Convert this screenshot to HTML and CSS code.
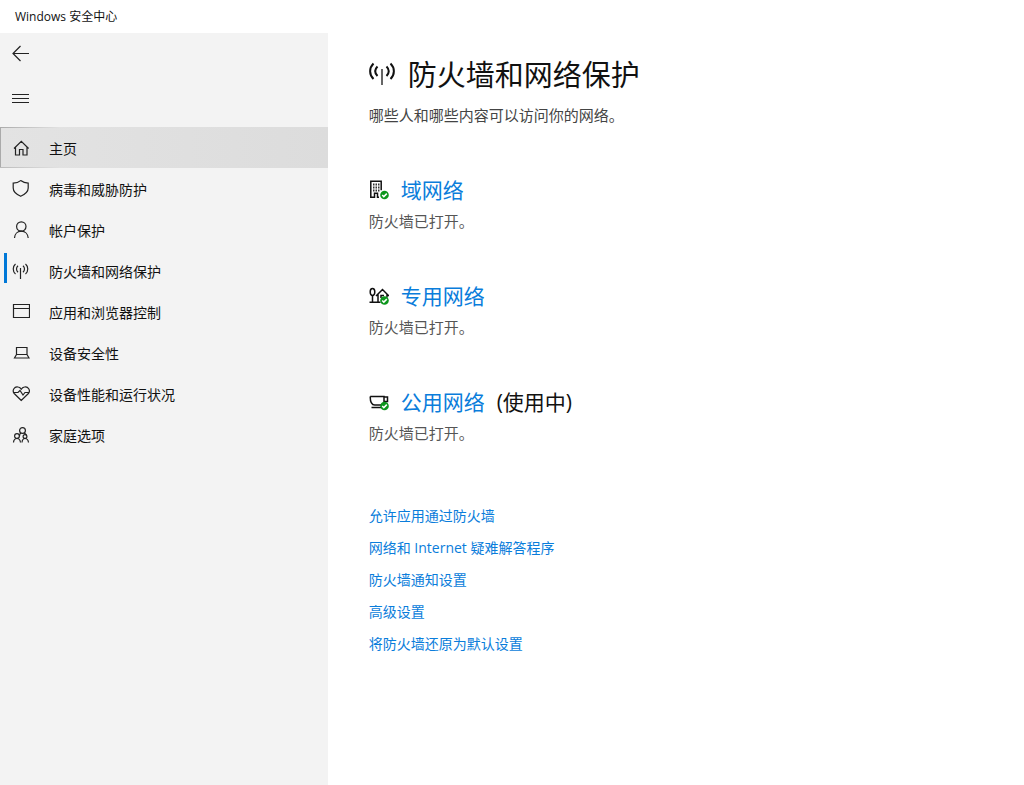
FILE: index.html
```html
<!DOCTYPE html>
<html lang="zh-CN">
<head>
<meta charset="utf-8">
<meta name="viewport" content="width=device-width, initial-scale=1">
<title>Windows 安全中心</title>
<link rel="stylesheet" href="styles.css">
</head>
<body>
<header class="titlebar">Windows 安全中心</header>
<div class="layout">
  <aside class="sidebar">
    <div class="tools">
      <button class="tool" type="button" aria-label="后退">
        <svg class="icon" viewBox="0 0 18 18"><path d="M17 8.500H1M8.500 1 1 8.500 8.500 16"/></svg>
      </button>
      <button class="tool" type="button" aria-label="菜单">
        <svg class="icon" viewBox="0 0 18 18"><path d="M0 4.500h17M0 8.500h17M0 12.500h17"/></svg>
      </button>
    </div>
    <nav class="nav">
      <a class="nav-item hovered" href="#home">
        <svg class="icon" viewBox="0 0 18 18"><path d="M2 9.500 9.300 2.300 16.600 9.500M3.500 8v8h4v-5.500h3.500v5.500h4V8"/></svg>
        <span>主页</span>
      </a>
      <a class="nav-item" href="#virus">
        <svg class="icon" viewBox="0 0 18 18"><path d="M8.700.6C6.500 2.300 4 3 1.200 3.100v5c0 3.500 3.500 6.500 7.500 8.200 4-1.700 7.500-4.700 7.500-8.200v-5C13.400 3 11 2.300 8.700.6z"/></svg>
        <span>病毒和威胁防护</span>
      </a>
      <a class="nav-item" href="#account">
        <svg class="icon" viewBox="0 0 18 18"><circle cx="9.300" cy="5.500" r="4.700"/><path d="M2.500 17c.2-4 3-6.800 6.800-6.800s6.600 2.800 6.900 6.800"/></svg>
        <span>帐户保护</span>
      </a>
      <a class="nav-item current" href="#firewall" aria-current="page">
        <svg class="icon" viewBox="0 0 18 18"><path d="M8.500 6v11M3.500 2C.500 4.500.500 9.500 3.500 12M13.500 2c3 2.500 3 7.500 0 10M6 3.800c-2 1.800-2 4.600 0 6.400M11 3.800c2 1.800 2 4.600 0 6.400"/></svg>
        <span>防火墙和网络保护</span>
      </a>
      <a class="nav-item" href="#apps">
        <svg class="icon" viewBox="0 0 18 18"><path d="M1.500 1.500h16v13h-16zM1.500 5.500h16"/></svg>
        <span>应用和浏览器控制</span>
      </a>
      <a class="nav-item" href="#device">
        <svg class="icon" viewBox="0 0 18 18"><path d="M4.500 10.500v-7h10.500v7M4.500 10.500h10.500l2 3.500h-14.500z"/></svg>
        <span>设备安全性</span>
      </a>
      <a class="nav-item" href="#health">
        <svg class="icon" viewBox="0 0 18 18"><path d="M9.300 15.500 2.200 8.500c-2.500-3 .3-7.500 4-6.500 1.500.3 2.500 1.200 3.100 2.200.6-1 1.600-1.900 3.100-2.200 3.700-1 6.500 3.500 4 6.500zM2 7.500h4l2-2 3 4.500 2-2.500h4"/></svg>
        <span>设备性能和运行状况</span>
      </a>
      <a class="nav-item" href="#family">
        <svg class="icon" viewBox="0 0 18 18"><circle cx="10.500" cy="4.500" r="2.900"/><circle cx="5" cy="10" r="2.400"/><circle cx="13" cy="10.500" r="1.900"/><path d="M1.500 16.500c.2-2.500 1.500-4 3.500-4s3.200 1.500 3.500 4M10 16.500c.2-2.500 1-4 3-4s3.200 1.500 3.500 4M9 7c-1 .5-1.500 1.500-1.500 3M12 7c1.300.5 2 1.200 2.500 2.300"/></svg>
        <span>家庭选项</span>
      </a>
    </nav>
  </aside>
  <main class="content">
    <div class="heading">
      <svg class="heading-icon" viewBox="0 0 26 26"><path class="ink" d="M4.500 1.500C0 6 0 12.500 4.500 17M21.500 1.500c4.500 4.500 4.500 11 0 15.500M8.500 4.500c-3 3-3 6.500 0 9.500M17.500 4.500c3 3 3 6.500 0 9.500"/><path class="stem" d="M13 7v16"/></svg>
      <h1>防火墙和网络保护</h1>
    </div>
    <p class="intro">哪些人和哪些内容可以访问你的网络。</p>
    <div class="networks">
      <section>
        <h2>
          <svg class="net-icon" viewBox="0 0 20 20"><path class="ink" d="M10 17.200H8.500v-4h-3v4H1.800V1.200h10.400v9"/><path class="windows" d="M4 4.500h6.500M4 7.500h6.500M4 10.500h6.500"/><circle class="badge" cx="15.500" cy="15" r="4.300"/><path class="tick" d="m13.200 15 1.600 1.600 3-3"/></svg>
          <a href="#domain">域网络</a>
        </h2>
        <p>防火墙已打开。</p>
      </section>
      <section>
        <h2>
          <svg class="net-icon" viewBox="0 0 20 20"><ellipse class="ink" cx="3.500" cy="6" rx="2.300" ry="3.400"/><path class="ink" d="M3.500 9.500v6.500M.500 16.200h11M7 10l6.500-6.500L20 10M9 8.500v7.500M18 8.500v3M12 12V9.500h3"/><circle class="badge" cx="15.500" cy="14.500" r="4.300"/><path class="tick" d="m13.200 14.500 1.600 1.600 3-3"/></svg>
          <a href="#private">专用网络</a>
        </h2>
        <p>防火墙已打开。</p>
      </section>
      <section>
        <h2>
          <svg class="net-icon" viewBox="0 0 20 20"><path class="ink" d="M1.200 4.500h13.800v8M1.200 4.500c0 5 1.500 8.500 4.500 8.500h7M15 5h3.500v4.500H15M2.500 15.500h9.500"/><circle class="badge" cx="15.500" cy="14" r="4.300"/><path class="tick" d="m13.200 14 1.600 1.600 3-3"/></svg>
          <a href="#public">公用网络</a>
          <span>(使用中)</span>
        </h2>
        <p>防火墙已打开。</p>
      </section>
    </div>
    <ul class="links">
      <li><a href="#allow">允许应用通过防火墙</a></li>
      <li><a href="#troubleshoot">网络和 Internet 疑难解答程序</a></li>
      <li><a href="#notify">防火墙通知设置</a></li>
      <li><a href="#advanced">高级设置</a></li>
      <li><a href="#restore">将防火墙还原为默认设置</a></li>
    </ul>
  </main>
</div>
</body>
</html>
```

FILE: styles.css
```css
* { box-sizing: border-box; }

body {
  display: flex;
  flex-direction: column;
  min-height: 100vh;
  margin: 0;
  background: #fff;
  color: #111;
  font-family: "Open Sans", "Noto Sans CJK SC", sans-serif;
  font-size: 14px;
}

h1, h2, p, ul { margin: 0; padding: 0; font-weight: 400; }
ul { list-style: none; }
a { color: #0a7ddb; text-decoration: none; }
svg { flex: none; fill: none; stroke: #222; }

.titlebar {
  padding: 0 15px;
  font-size: 12px;
  line-height: 33px;
}

.layout { display: flex; flex: 1; }

.sidebar { flex: 0 0 32%; background: #f3f3f3; }

.tools {
  display: flex;
  flex-direction: column;
  align-items: flex-start;
  gap: 4px;
  padding-bottom: 8px;
}

.tool {
  display: flex;
  align-items: center;
  height: 41px;
  padding: 0 12px;
  border: 0;
  background: none;
}

.icon { width: 18px; height: 18px; stroke-width: 1.2; }

.nav-item {
  display: flex;
  align-items: center;
  gap: 19px;
  height: 41px;
  padding: 0 12px;
  color: #111;
}

.hovered {
  background:
    linear-gradient(90deg, #aaa, transparent 60px) top / 100% 1px no-repeat,
    linear-gradient(90deg, #bbb, transparent 60px) bottom / 100% 1px no-repeat,
    linear-gradient(#aaa, #aaa) left / 1px 100% no-repeat,
    linear-gradient(90deg, #e3e3e3, #dcdcdc);
}

.current {
  background: linear-gradient(#0078d7, #0078d7) 4px 3px / 3px 30px no-repeat;
}

.content { flex: 1; min-width: 0; padding: 22px 41px; }

.heading { display: flex; align-items: center; gap: 13px; }
.heading h1 { font-size: 29px; line-height: 40px; }
.heading-icon { width: 26px; height: 26px; stroke-width: 2; }
.stem { stroke: #666; }

.intro {
  margin-top: 4px;
  color: #444;
  font-size: 15px;
  line-height: 32px;
}

.networks {
  display: grid;
  gap: 44px;
  margin-top: 44px;
}

.networks h2 {
  display: flex;
  align-items: center;
  gap: 12px;
  font-size: 21px;
  line-height: 30px;
}

.networks p { color: #555; font-size: 15px; line-height: 32px; }

.net-icon { width: 20px; height: 20px; stroke-width: 1.5; }
.ink { stroke: #111; }
.windows { stroke: #333; stroke-width: 2; stroke-dasharray: 1.5 1; }
.badge { fill: #0c961c; stroke: none; }
.tick { stroke: #fff; }

.links { margin-top: 51px; line-height: 32px; }
```
